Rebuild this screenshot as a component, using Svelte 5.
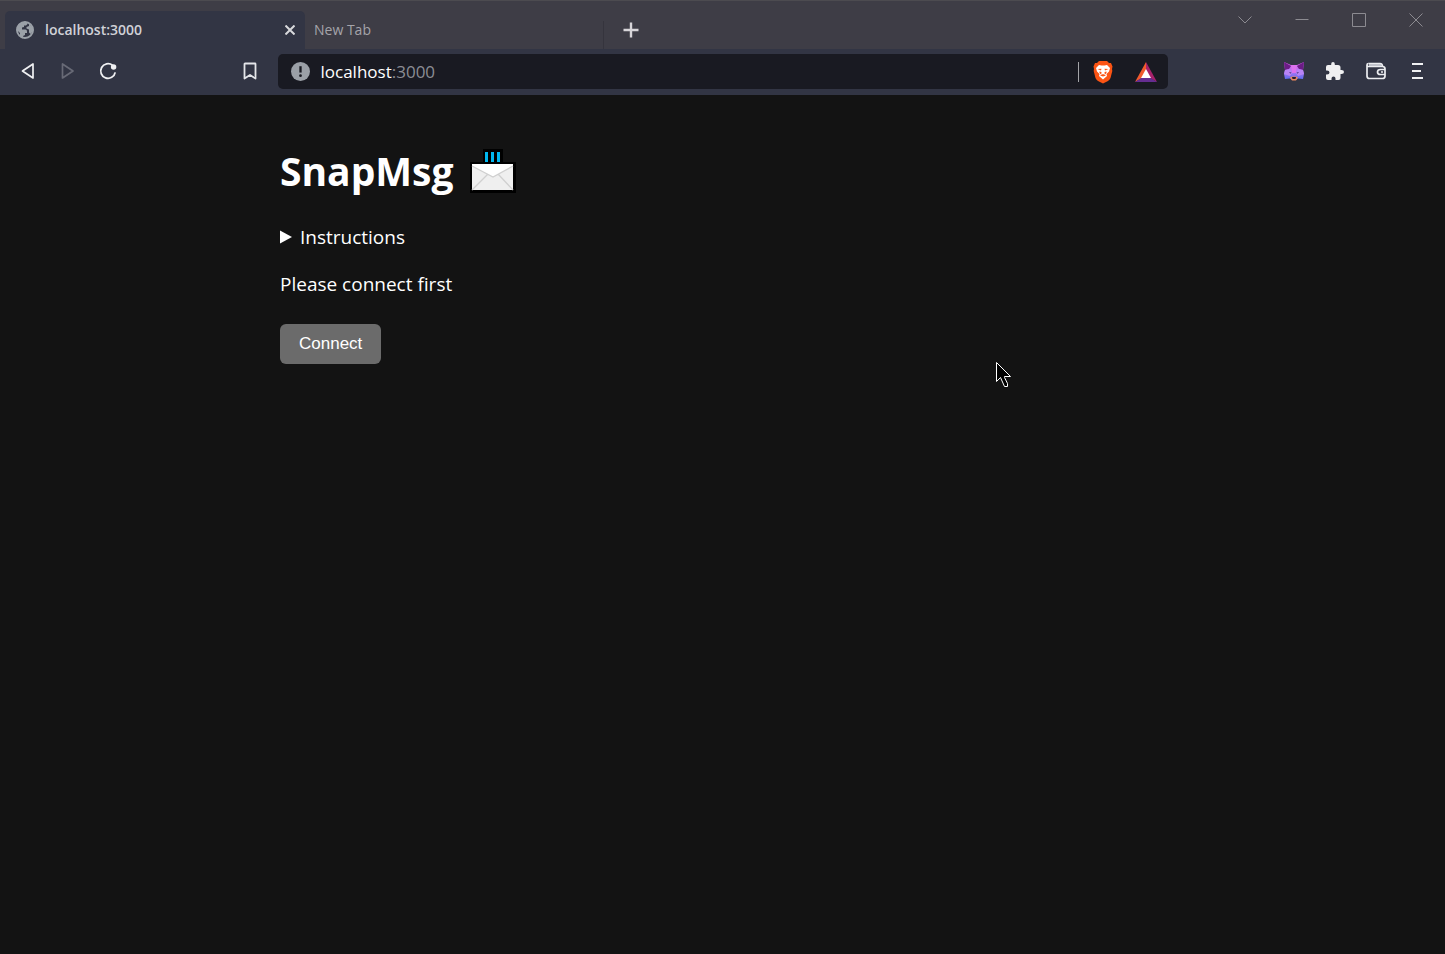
<script>
  let connected = $state(false);
  let address = $state('localhost:3000');
  let editing = $state(false);
</script>

<div class="browser">
  <header class="tabstrip">
    <div class="tab active">
      <svg class="globe" width="18" height="18" viewBox="0 0 18 18" aria-hidden="true">
        <circle cx="9" cy="9" r="8" fill="#323544" stroke="#9ba1a8" stroke-width="2" />
        <path d="M1 9V6Q3 1 9 .8Q12 1 11.500 3L10 4.500H8V6L6 6.500V8.500H9.500Q11 8.500 11 10.500V12H9V14L7 15V17.500L4 16V12L1 9Z" fill="#9ba1a8" />
        <path d="M13 2.500 16 6 17 10 14.500 13 13 11.500V8.500L10.500 7.500V6L13 5Z" fill="#9ba1a8" />
      </svg>
      <span class="tab-title">localhost:3000</span>
      <button class="close" aria-label="Close tab">
        <svg width="10" height="10" viewBox="0 0 10 10" fill="none" stroke="#d8d9dc" stroke-width="2"><path d="M.5 .5 9.500 9.500M9.500 .5 .5 9.500" /></svg>
      </button>
    </div>
    <div class="tab"><span class="tab-title">New Tab</span></div>
    <button class="new-tab" aria-label="Open new tab">
      <svg width="16" height="16" viewBox="0 0 16 16" fill="none" stroke="#d7d5d9" stroke-width="2.400"><path d="M8 .5V15.500M.5 8H15.500" /></svg>
    </button>
    <div class="window-controls">
      <button aria-label="Search tabs"><svg width="14" height="14" viewBox="0 0 14 14"><path d="M.5 3.500 7 10 13.500 3.500" /></svg></button>
      <button aria-label="Minimize"><svg width="14" height="14" viewBox="0 0 14 14"><path d="M.5 6.500H13.500" /></svg></button>
      <button aria-label="Maximize"><svg width="14" height="14" viewBox="0 0 14 14"><path d="M.5 .5H13.500V13.500H.5Z" /></svg></button>
      <button aria-label="Close window"><svg width="14" height="14" viewBox="0 0 14 14"><path d="M.5 .5 13.500 13.500M13.500 .5 .5 13.500" /></svg></button>
    </div>
  </header>

  <div class="toolbar">
    <nav class="navigation" aria-label="Browser navigation">
      <button aria-label="Back"><svg width="20" height="20" viewBox="0 0 20 20" fill="none" stroke="#f0f1f3" stroke-width="1.700" stroke-linejoin="round"><path d="M15 3V17L4.500 10Z" /></svg></button>
      <button aria-label="Forward" disabled><svg width="20" height="20" viewBox="0 0 20 20" fill="none" stroke="#686a76" stroke-width="1.700" stroke-linejoin="round"><path d="M4.500 3V17L15 10Z" /></svg></button>
      <button aria-label="Reload"><svg width="20" height="20" viewBox="0 0 20 20" fill="none" stroke="#f0f1f3" stroke-width="1.800"><path d="M14.500 4.200A7.300 7.300 0 1 0 17.200 11.300" /><circle cx="15.600" cy="6" r="2.700" fill="#f0f1f3" stroke="none" /></svg></button>
      <button class="bookmark" aria-label="Bookmark this tab"><svg width="20" height="20" viewBox="0 0 20 20" fill="none" stroke="#e4e5e9" stroke-width="1.800" stroke-linejoin="round"><path d="M4.500 3Q4.500 2.500 5 2.500H15Q15.500 2.500 15.500 3V17.500L10 14 4.500 17.500Z" /></svg></button>
    </nav>

    <div class="addressbar">
      <button class="site-info" aria-label="View site information">
        <svg width="19" height="19" viewBox="0 0 18 18"><circle cx="9" cy="9" r="9" fill="#9ba0a7" /><path d="M9 4V10" stroke="#191a22" stroke-width="2.200" /><circle cx="9" cy="13" r="1.300" fill="#191a22" /></svg>
      </button>
      {#if editing}
        <input aria-label="Address" bind:value={address} onblur={() => (editing = false)} />
      {:else}
        <button class="url" onclick={() => (editing = true)}>localhost<span>:3000</span></button>
      {/if}
      <span class="divider"></span>
      <button class="shield" aria-label="Brave Shields">
        <svg width="20" height="24" viewBox="0 0 20 24">
          <path d="M6 1H14L16 3 18 3 19.500 6.500 19 9 19.300 11 17.500 18Q17 19.500 15 21L10 23.500 5 21Q3 19.500 2.500 18L.7 11 1 9 .5 6.500 2 3 4 3Z" fill="#fb5414" />
          <path d="M6 5 8.500 5.500H11.500L14 5 17 8 16 11.500 13.500 14 14 16 10 19.500 6 16 6.500 14 4 11.500 3 8Z" fill="#fff" />
          <path d="M4.500 9 8.500 8.800 8 10.500ZM15.500 9 11.500 8.800 12 10.500ZM6.500 11.500 8.500 12 8.200 14.800 6.500 13ZM13.500 11.500 11.500 12 11.800 14.800 13.500 13ZM7 15.500 10 14 13 15.500 10 16.500Z" fill="#fb5414" />
        </svg>
      </button>
      <button class="rewards" aria-label="Brave Rewards">
        <svg width="22" height="20" viewBox="0 0 22 20"><path d="M11 0 0 20 7 16 11 8Z" fill="#f15a2d" /><path d="M11 0 22 20 15 16 11 8Z" fill="#a7216b" /><path d="M0 20H22L15 15.500H7Z" fill="#652d91" /><path d="M11 7 16 16H6Z" fill="#fff" /></svg>
      </button>
    </div>

    <div class="extensions">
      <button aria-label="MetaMask">
        <svg width="22" height="20" viewBox="0 0 22 20">
          <defs><linearGradient id="fox" x1="0" y1="0" x2="0" y2="1"><stop offset="0" stop-color="#d45be4" /><stop offset=".5" stop-color="#b675f3" /><stop offset="1" stop-color="#536cef" /></linearGradient></defs>
          <path d="M1 1 8 4H14L21 1 20 9 21 13 20 18 15 17.500 13 19H9L7 17.500 2 18 1 13 2 9Z" fill="url(#fox)" />
          <path d="M1 1 8 5 6 8 2 9Z" fill="#6b1c86" /><path d="M21 1 14 5 16 8 20 9Z" fill="#6b1c86" />
          <path d="M8 4H14L13 12H9Z" fill="#dc72ef" /><path d="M2 9 7 8 9 12 7 15 1 13ZM20 9 15 8 13 12 15 15 21 13Z" fill="#b884f5" />
          <path d="M6 11 8.500 11.500 7.500 12.800ZM16 11 13.500 11.500 14.500 12.800Z" fill="#4b347f" />
          <path d="M7 16.500 9 15.500H13L15 16.500 13 19.500H9Z" fill="#eb875b" /><path d="M9 16H13L12.500 18H9.500Z" fill="#251e39" />
        </svg>
      </button>
      <button aria-label="Extensions">
        <svg width="20" height="20" viewBox="0 0 20 20"><path d="M6.200 4V3Q6.200 1 8 1T9.800 3V4H13Q15.500 4 15.500 6.500V9H16.500Q19 9 19 11T16.500 13H15.500V17Q15.500 19 13.500 19H10.500V17.500Q10.500 15.500 8.500 15.500T6.500 17.500V19H3Q1 19 1 17V13.500H2Q4.500 13.500 4.500 11.500T2 9.500H1V6Q1 4 3 4Z" fill="#f0f0f1" /></svg>
      </button>
      <button aria-label="Wallet">
        <svg width="22" height="20" viewBox="0 0 22 20" fill="none" stroke="#ecedf0" stroke-width="1.700"><path d="M4 4H16.500" stroke="#b5b6c1" stroke-width="2" /><path d="M3.500 2.500H15Q17.500 2.500 17.500 5.500" /><path d="M2 4V15Q2 17.500 4.500 17.500H17.500Q20 17.500 20 15V8Q20 5.500 17.500 5.500H3.500Q2 5.500 2 4T3.500 2.500" /><path d="M20 8.500H15.500Q12.500 8.500 12.500 11T15.500 13.500H20M16 11H18" /></svg>
      </button>
      <button aria-label="Browser menu"><svg width="20" height="20" viewBox="0 0 20 20" stroke="#f0f1f3" stroke-width="2"><path d="M5 3H16M5 10H14M5 17H16" /></svg></button>
    </div>
  </div>

  <main>
    <h1>SnapMsg
      <svg class="envelope" width="46" height="44" viewBox="0 0 46 44" aria-hidden="true">
        <path d="M13 0H33V13H46V44H0V13H13Z" fill="#000" />
        <path d="M15 3H18V13H15ZM21 3H24V13H21ZM27 3H30V13H27Z" fill="#00b7ef" />
        <path d="M2 15H43V41H2Z" fill="#efefef" /><path d="M2 15H43V17L23 28 2 17Z" fill="#fff" />
        <path d="M2 17 23 28 43 17M2 41 18 25M43 41 28 25" fill="none" stroke="#d0d0d0" stroke-width="1.300" />
      </svg>
    </h1>
    <details>
      <summary><svg width="12" height="14" viewBox="0 0 12 14" aria-hidden="true"><path d="M0 .5 12 7 0 13.500Z" fill="#fff" /></svg>Instructions</summary>
    </details>
    {#if !connected}<p>Please connect first</p>{/if}
    <button class="connect" onclick={() => (connected = true)}>Connect</button>
  </main>

  <svg class="pointer" width="18" height="28" viewBox="0 0 18 28" aria-hidden="true"><path d="M1.500 1.500V20.500L5.500 16.500 9.500 25.500H12.500V22.500L9.500 16.500V15.500H15.500Z" fill="#000" stroke="#fff" /></svg>
</div>

<style>
  :global(body) { margin: 0; background: #131313; }
  .browser { position: relative; min-height: 100vh; color: #fff; font-family: "Segoe UI", "Open Sans", sans-serif; }
  button { display: flex; align-items: center; justify-content: center; padding: 0; border: 0; background: none; color: inherit; font: inherit; }
  svg { display: block; flex: none; }
  .tabstrip { display: flex; align-items: flex-end; box-sizing: border-box; height: 49px; padding-left: 5px; border-top: 1px solid #4c4b50; background: #3e3d46; }
  .tab { display: flex; align-items: center; box-sizing: border-box; width: 299px; height: 38px; padding: 0 9px; color: #a5a4aa; font-size: 14px; }
  .tab:not(.active) { background: linear-gradient(#35343d, #35343d) right 10px / 1px 28px no-repeat; }
  .tab-title { line-height: 20px; }
  .active { width: 300px; padding: 0 10px 0 11px; gap: 11px; border-radius: 5px 5px 0 0; background: #323544; color: #d0d1d7; }
  .active .tab-title { flex: 1; font-weight: 600; }
  .new-tab { width: 54px; height: 38px; }
  .window-controls { display: flex; align-self: flex-start; margin-left: auto; padding-right: 1px; }
  .window-controls button { width: 57px; height: 37px; }
  .window-controls svg { fill: none; stroke: #8c8b91; stroke-width: 1; }
  .toolbar { display: grid; grid-template-columns: minmax(270px, 1fr) minmax(0, 890px) minmax(200px, 1fr); align-items: center; box-sizing: border-box; height: 46px; padding-bottom: 1px; background: #323544; }
  .navigation { display: flex; align-items: center; gap: 20px; padding: 0 18px 1px; }
  .bookmark { margin-left: auto; }
  .addressbar { display: flex; align-items: center; box-sizing: border-box; height: 35px; padding: 0 11px 0 13px; border-radius: 5px; background: #191a22; }
  .url, input { flex: 1; justify-content: flex-start; margin-left: 11px; font-size: 17px; }
  input { padding: 0; border: 0; outline: 0; background: transparent; color: #fff; font-family: inherit; }
  .url span { color: #8b8d94; }
  .divider { width: 1px; height: 20px; background: #a3a4a8; }
  .shield { margin-left: 14px; }
  .rewards { margin-left: 22px; }
  .extensions { display: flex; align-items: center; justify-content: flex-end; gap: 20px; padding: 0 18px 1px 0; }
  main { box-sizing: border-box; max-width: 885px; margin: 0 auto; padding-top: 44px; }
  h1 { display: flex; align-items: center; gap: 16px; margin: 0; font-size: 39px; line-height: 64px; }
  summary { display: flex; align-items: center; gap: 8px; list-style: none; }
  details { margin-top: 20px; font-size: 19px; line-height: 28px; }
  p { margin: 19px 0 26px; font-size: 19px; line-height: 28px; }
  .connect { height: 40px; padding: 0 19px; border-radius: 6px; background: #6b6b6b; font: 17px "Liberation Sans", Arial, sans-serif; }
  .pointer { position: absolute; top: 361px; left: 995px; pointer-events: none; }
</style>
